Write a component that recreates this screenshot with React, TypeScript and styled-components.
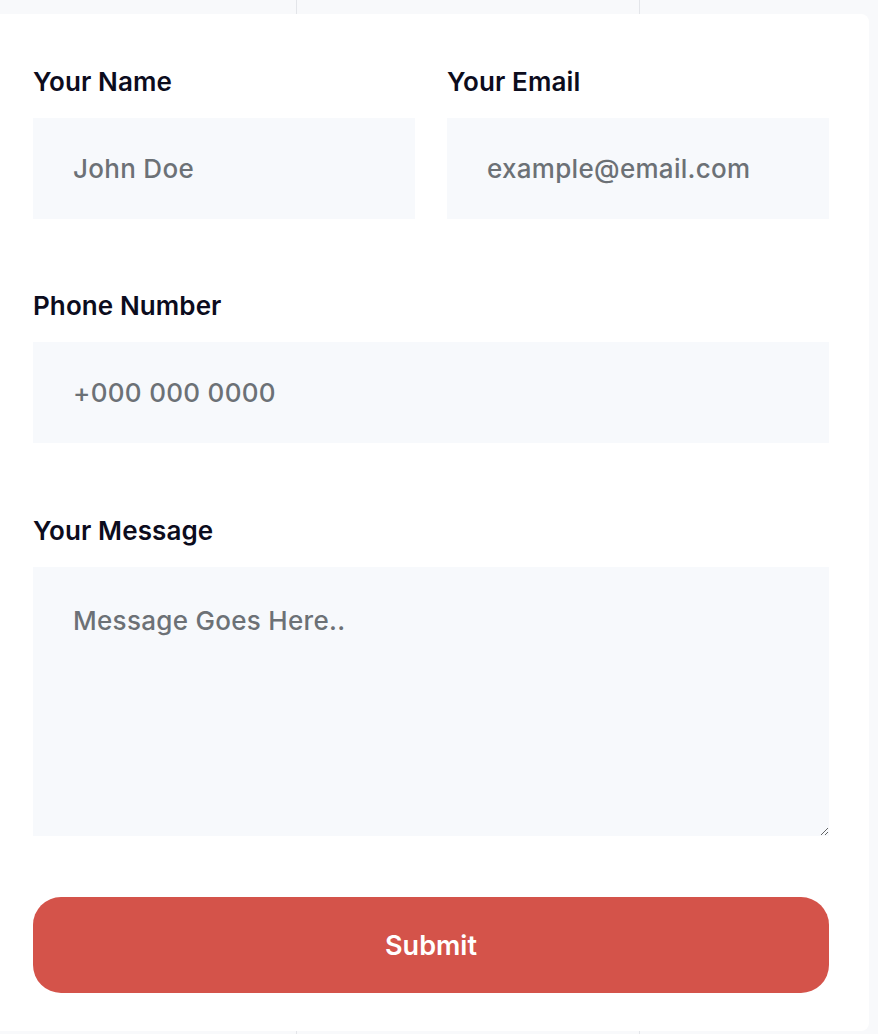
import React from 'react'
import styled, { createGlobalStyle } from 'styled-components'

const GlobalStyle = createGlobalStyle`
  * {
    box-sizing: border-box;
  }

  body {
    margin: 0;
    background: #f8f9fb;
    font-family: Inter, "Noto Sans", sans-serif;
    overflow: hidden;
  }
`

const Page = styled.div`
  display: flex;
  flex-direction: column;
  height: 1034px;
`

const Strip = styled.div<{ $height: number }>`
  display: grid;
  grid-template-columns: 297px 343px 1fr;
  height: ${props => props.$height}px;
  flex-shrink: 0;
`

const StripCell = styled.div`
  border-right: 1px solid #e3e5e9;

  &:last-child {
    border-right: none;
  }
`

const Card = styled.form`
  flex: 1;
  width: 869px;
  background: #ffffff;
  border-radius: 0 8px 8px 0;
  padding: 53px 40px 0 33px;
  display: flex;
  flex-direction: column;
`

const Row = styled.div`
  display: grid;
  grid-template-columns: minmax(0, 1fr) minmax(0, 1fr);
  gap: 32px;
  margin-bottom: 72px;
`

const Field = styled.label<{ $spacing?: number }>`
  display: flex;
  flex-direction: column;
  min-width: 0;
  margin-bottom: ${props => props.$spacing ?? 0}px;
`

const Label = styled.span`
  font-size: 26px;
  line-height: 30px;
  font-weight: 600;
  color: #0c0c1d;
  letter-spacing: 0.1px;
  margin-bottom: 21px;
`

const Input = styled.input`
  width: 100%;
  height: 101px;
  border: none;
  outline: none;
  background: #f7f9fc;
  padding: 0 40px;
  font-family: inherit;
  font-size: 26px;
  font-weight: 500;
  letter-spacing: 0.3px;
  color: #0c0c1d;

  &::placeholder {
    color: #6c7176;
  }
`

const TextArea = styled.textarea`
  width: 100%;
  height: 269px;
  border: none;
  outline: none;
  background: #f7f9fc;
  padding: 38px 40px;
  font-family: inherit;
  font-size: 26px;
  font-weight: 500;
  letter-spacing: 0.3px;
  color: #0c0c1d;
  resize: vertical;

  &::placeholder {
    color: #6c7176;
  }
`

const SubmitButton = styled.button`
  margin-top: 61px;
  height: 96px;
  border: none;
  border-radius: 28px;
  background: #d4534a;
  color: #ffffff;
  font-family: inherit;
  font-size: 27px;
  font-weight: 600;
  cursor: pointer;
`

export default function App() {
  return (
    <>
      <GlobalStyle />
      <Page>
        <Strip $height={14}>
          <StripCell />
          <StripCell />
          <StripCell />
        </Strip>
        <Card onSubmit={e => e.preventDefault()}>
          <Row>
            <Field>
              <Label>Your Name</Label>
              <Input type="text" placeholder="John Doe" />
            </Field>
            <Field>
              <Label>Your Email</Label>
              <Input type="email" placeholder="example@email.com" />
            </Field>
          </Row>
          <Field $spacing={73}>
            <Label>Phone Number</Label>
            <Input type="tel" placeholder="+000 000 0000" />
          </Field>
          <Field>
            <Label>Your Message</Label>
            <TextArea placeholder="Message Goes Here.." />
          </Field>
          <SubmitButton type="submit">Submit</SubmitButton>
        </Card>
        <Strip $height={3}>
          <StripCell />
          <StripCell />
          <StripCell />
        </Strip>
      </Page>
    </>
  )
}
